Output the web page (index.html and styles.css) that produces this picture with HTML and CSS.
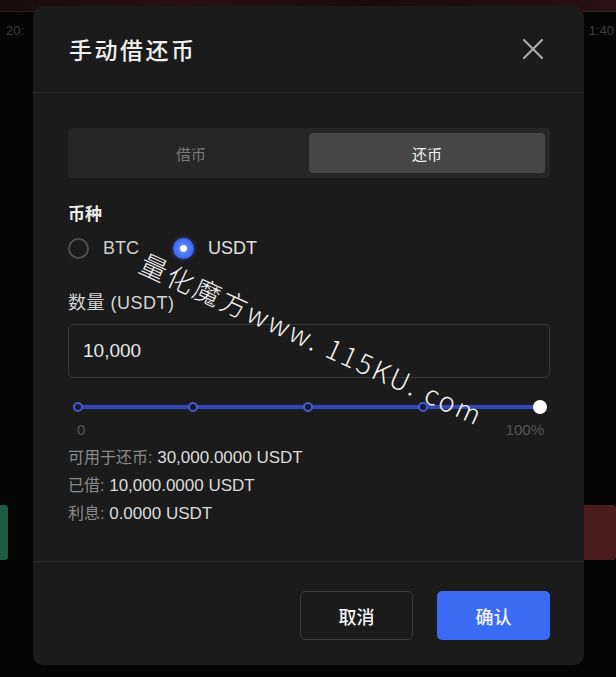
FILE: index.html
```html
<!DOCTYPE html>
<html lang="zh-CN">
  <head>
    <meta charset="UTF-8" />
    <title>手动借还币</title>
    <link rel="stylesheet" href="styles.css">
  </head>
  <body>
    <div class="backdrop">
      <div class="bg-strip"></div>
      <span class="bg-time bg-time-left">20:</span>
      <span class="bg-time bg-time-right">1:40</span>
      <div class="bg-btn bg-btn-buy"></div>
      <div class="bg-btn bg-btn-sell"></div>
    </div>

    <div class="modal">
      <div class="modal-header">
        <h1>手动借还币</h1>
        <button class="close" aria-label="close">
          <svg width="22" height="22" viewBox="0 0 22 22">
            <path d="M2 2 L20 20 M20 2 L2 20" stroke="#a9a9a9" stroke-width="2.2" stroke-linecap="round" />
          </svg>
        </button>
      </div>

      <div class="modal-body">
        <div class="tabs">
          <div class="tab">借币</div>
          <div class="tab active">还币</div>
        </div>

        <div class="field-label">币种</div>
        <div class="radio-group">
          <label class="radio"><span class="dot"></span>BTC</label>
          <label class="radio checked"><span class="dot"></span>USDT</label>
        </div>

        <div class="field-label amount-label">数量 (USDT)</div>
        <div class="amount-input">10,000</div>

        <div class="slider">
          <div class="track"></div>
          <span class="mark"></span>
          <span class="mark"></span>
          <span class="mark"></span>
          <span class="mark"></span>
          <span class="handle"></span>
        </div>
        <div class="slider-scale">
          <span>0</span>
          <span>100%</span>
        </div>

        <div class="info">
          <div><span class="k">可用于还币:</span> 30,000.0000 USDT</div>
          <div><span class="k">已借:</span> 10,000.0000 USDT</div>
          <div><span class="k">利息:</span> 0.0000 USDT</div>
        </div>
      </div>

      <div class="modal-footer">
        <button class="btn btn-cancel">取消</button>
        <button class="btn btn-ok">确认</button>
      </div>

      <div class="watermark">量化魔方www. 115KU. com</div>
    </div>
  </body>
</html>
```

FILE: styles.css
```css
body {
  margin: 0;
  background: #050505;
  font-family: "Liberation Sans", "Noto Sans CJK SC", sans-serif;
  width: 616px;
  height: 677px;
  overflow: hidden;
  position: relative;
}
.backdrop {
  position: absolute;
  inset: 0;
}
.bg-strip {
  height: 11px;
  background: linear-gradient(90deg, #1a0b0d, #2a1013 30%, #1b0a0c 60%, #2a1113);
  border-bottom: 1px solid #262626;
}
.bg-time {
  position: absolute;
  top: 23px;
  font-size: 13px;
  color: #3d3d3d;
}
.bg-time-left {
  left: 6px;
}
.bg-time-right {
  right: 2px;
}
.bg-btn {
  position: absolute;
  top: 505px;
  height: 55px;
  border-radius: 3px;
}
.bg-btn-buy {
  left: -6px;
  width: 14px;
  background: #1f5a43;
}
.bg-btn-sell {
  right: 0;
  width: 40px;
  background: #4a1c1c;
}

.modal {
  position: relative;
  margin: 6px 0 0 33px;
  width: 551px;
  height: 659px;
  background: #1b1b1b;
  border-radius: 10px;
  display: flex;
  flex-direction: column;
  overflow: hidden;
}
.modal-header {
  height: 86px;
  padding: 0 40px 0 36px;
  display: flex;
  align-items: center;
  justify-content: space-between;
  border-bottom: 1px solid #2a2a2a;
}
.modal-header h1 {
  margin: 0;
  font-size: 23px;
  font-weight: 500;
  color: #f0f0f0;
  letter-spacing: 2.5px;
}
.close {
  background: none;
  border: none;
  padding: 0;
  width: 22px;
  height: 22px;
  cursor: pointer;
}

.modal-body {
  flex: 1;
  padding: 35px 34px 0 35px;
  border-bottom: 1px solid #2a2a2a;
}
.tabs {
  height: 50px;
  box-sizing: border-box;
  background: #262626;
  border-radius: 4px;
  padding: 5px;
  display: flex;
}
.tab {
  flex: 1;
  display: flex;
  align-items: center;
  justify-content: center;
  font-size: 15px;
  color: #7a7a7a;
  border-radius: 4px;
}
.tab.active {
  background: #474747;
  color: #f2f2f2;
}

.field-label {
  margin-top: 26px;
  font-size: 17px;
  line-height: 22px;
  font-weight: 700;
  color: #ececec;
}
.amount-label {
  margin-top: 33px;
  font-size: 18px;
  font-weight: 400;
  letter-spacing: 0.5px;
  color: #d4d4d4;
}
.radio-group {
  margin-top: 11px;
  display: flex;
  gap: 34px;
  height: 22px;
}
.radio {
  display: flex;
  align-items: center;
  gap: 14px;
  font-size: 18px;
  color: #cfcfcf;
}
.radio .dot {
  width: 21px;
  height: 21px;
  box-sizing: border-box;
  border: 2px solid #4f4f4f;
  border-radius: 50%;
}
.radio.checked .dot {
  border: none;
  background: radial-gradient(circle, #ffffff 0 3px, #5c84ff 4px, #3a66f2 10px);
  box-shadow: 0 0 4px rgba(70, 110, 250, 0.6);
}
.radio.checked {
  color: #e0e0e0;
}

.amount-input {
  margin-top: 10px;
  height: 54px;
  box-sizing: border-box;
  border: 1px solid #383838;
  border-radius: 5px;
  padding: 0 14px;
  display: flex;
  align-items: center;
  font-size: 19px;
  color: #e6e6e6;
}

.slider {
  position: relative;
  margin: 22px 5px 0 5px;
  height: 14px;
  display: flex;
  align-items: center;
  justify-content: space-between;
}
.slider .track {
  position: absolute;
  left: 0;
  right: 0;
  top: 5px;
  height: 4px;
  background: #3448b3;
  border-radius: 2px;
  box-shadow: 0 0 2px #1f2d78;
}
.slider .mark {
  position: relative;
  width: 10px;
  height: 10px;
  box-sizing: border-box;
  border-radius: 50%;
  border: 2px solid #4a5cc0;
  background: #15183a;
}
.slider .handle {
  position: relative;
  width: 14px;
  height: 14px;
  border-radius: 50%;
  background: #ffffff;
  margin-right: -2px;
}
.slider-scale {
  margin-top: 8px;
  display: flex;
  justify-content: space-between;
  font-size: 15px;
  line-height: 16px;
  color: #565656;
  padding: 0 6px 0 9px;
}

.info {
  margin-top: 6px;
  font-size: 17px;
  line-height: 28px;
  color: #dcdcdc;
}
.info .k {
  font-size: 16px;
  color: #8a8a8a;
}

.modal-footer {
  height: 103px;
  padding: 29px 34px 0 0;
  box-sizing: border-box;
  display: flex;
  justify-content: flex-end;
  gap: 24px;
}
.btn {
  width: 113px;
  height: 49px;
  border-radius: 5px;
  font-family: "Noto Sans CJK SC", sans-serif;
  font-size: 18px;
  font-weight: 500;
  color: #f4f4f4;
  cursor: pointer;
}
.btn-cancel {
  background: #1b1b1b;
  border: 1px solid #3c3c3c;
}
.btn-ok {
  background: #3a6bf2;
  border: none;
}

.watermark {
  position: absolute;
  left: 117px;
  top: 237px;
  transform-origin: 0 0;
  transform: rotate(24.5deg);
  font-family: "Noto Sans CJK SC", sans-serif;
  font-weight: 300;
  font-size: 27px;
  color: #f2f2f2;
  letter-spacing: 2.5px;
  white-space: nowrap;
  pointer-events: none;
}
```
